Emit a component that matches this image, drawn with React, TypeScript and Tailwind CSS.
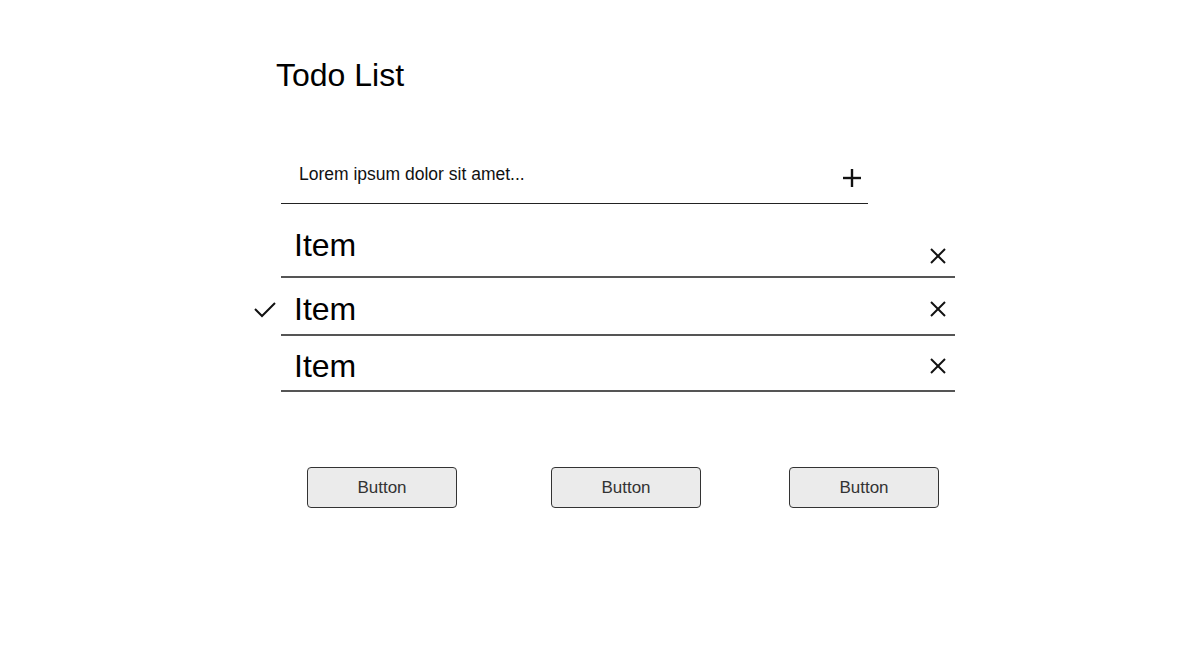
import React from 'react';

const CloseIcon: React.FC = () => (
  <svg width="20" height="20" viewBox="0 0 20 20" fill="none" stroke="#111" strokeWidth="2">
    <line x1="3" y1="3" x2="17" y2="17" />
    <line x1="17" y1="3" x2="3" y2="17" />
  </svg>
);

const CheckIcon: React.FC = () => (
  <svg width="24" height="20" viewBox="0 0 24 20" fill="none" stroke="#111" strokeWidth="2">
    <polyline points="2,9 9,16 22,3" />
  </svg>
);

const PlusIcon: React.FC = () => (
  <svg width="20" height="20" viewBox="0 0 20 20" fill="none" stroke="#111" strokeWidth="2.4">
    <line x1="10" y1="1" x2="10" y2="19" />
    <line x1="1" y1="10" x2="19" y2="10" />
  </svg>
);

const App: React.FC = () => {
  return (
    <div className="min-h-screen bg-white font-['Liberation_Sans',Arial,sans-serif] text-black">
      {/* Header */}
      <h1 className="pt-[57px] pl-[276px] text-[32px] leading-[36px] font-normal">Todo List</h1>

      {/* New item input */}
      <div className="ml-[281px] mt-[57px] w-[587px] h-[54px] flex border-b border-[#222]">
        <span className="pl-[18px] pt-[14px] text-[17.5px] leading-[20px] text-[#111]">
          Lorem ipsum dolor sit amet...
        </span>
        <span className="ml-auto mr-[6px] mt-[18px]">
          <PlusIcon />
        </span>
      </div>

      {/* Items */}
      <div className="ml-[250px] w-[705px]">
        <div className="flex">
          <div className="w-[31px]" />
          <div className="flex-1 h-[74px] flex border-b-2 border-[#555]">
            <span className="pl-[13px] pt-[23px] text-[32px] leading-[36px]">Item</span>
            <span className="ml-auto mr-[7px] mt-[42px]">
              <CloseIcon />
            </span>
          </div>
        </div>

        <div className="flex">
          <div className="w-[31px] flex items-center pt-[5px] pl-[3px]">
            <CheckIcon />
          </div>
          <div className="flex-1 h-[58px] flex items-center pt-[5px] border-b-2 border-[#555]">
            <span className="pl-[13px] text-[32px] leading-[36px]">Item</span>
            <span className="ml-auto mr-[7px]">
              <CloseIcon />
            </span>
          </div>
        </div>

        <div className="flex">
          <div className="w-[31px]" />
          <div className="flex-1 h-[56px] flex items-center pt-[5px] border-b-2 border-[#555]">
            <span className="pl-[13px] text-[32px] leading-[36px]">Item</span>
            <span className="ml-auto mr-[7px]">
              <CloseIcon />
            </span>
          </div>
        </div>
      </div>

      {/* Buttons */}
      <div className="mt-[75px] pl-[307px] flex">
        <button className="w-[150px] h-[41px] rounded-[4px] border border-[#333] bg-[#ebebeb] text-[17px] text-[#333]">
          Button
        </button>
        <button className="ml-[94px] w-[150px] h-[41px] rounded-[4px] border border-[#333] bg-[#ebebeb] text-[17px] text-[#333]">
          Button
        </button>
        <button className="ml-[88px] w-[150px] h-[41px] rounded-[4px] border border-[#333] bg-[#ebebeb] text-[17px] text-[#333]">
          Button
        </button>
      </div>
    </div>
  );
};

export default App;
